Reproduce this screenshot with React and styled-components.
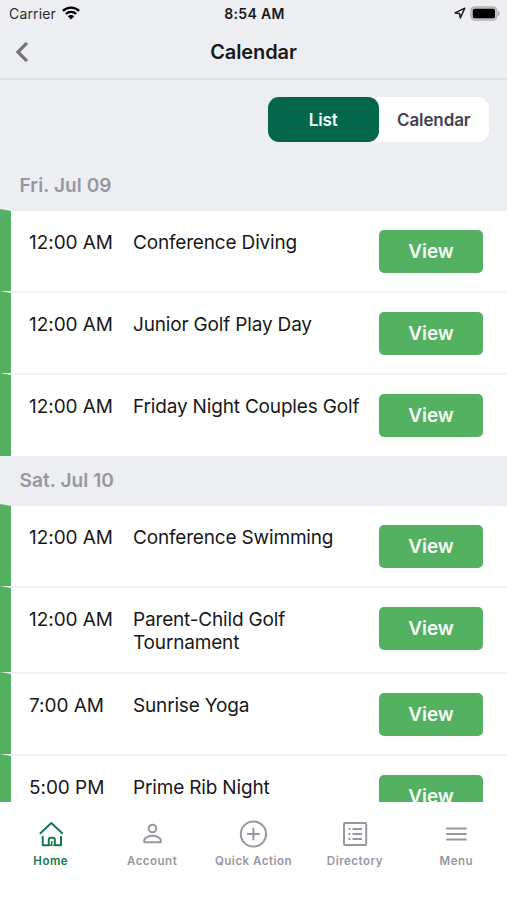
import React, { useState } from 'react';
import styled, { createGlobalStyle } from 'styled-components';

const GlobalStyle = createGlobalStyle`
  * {
    box-sizing: border-box;
  }
  body {
    margin: 0;
    background: #fff;
    font-family: Inter, 'Liberation Sans', sans-serif;
    color: #18181a;
  }
  button {
    font-family: inherit;
    border: 0;
    padding: 0;
    cursor: pointer;
  }
`;

const Screen = styled.div`
  width: 507px;
  height: 900px;
  display: flex;
  flex-direction: column;
  overflow: hidden;
  background: #edeef2;
`;

const StatusBar = styled.div`
  height: 27px;
  flex: none;
  display: grid;
  grid-template-columns: 1fr auto 1fr;
  align-items: center;
  padding: 0 7px 0 9px;
`;

const StatusGroup = styled.div`
  display: flex;
  align-items: center;
  justify-content: ${(props) => (props.$end ? 'flex-end' : 'flex-start')};
  gap: ${(props) => (props.$end ? '4px' : '6px')};
  & svg {
    display: block;
    margin-bottom: 1px;
  }
`;

const Carrier = styled.span`
  font-size: 14px;
  line-height: 27px;
  letter-spacing: 0.15px;
  color: #2b2b2e;
`;

const Clock = styled.span`
  font-size: 14px;
  font-weight: 600;
  line-height: 27px;
  letter-spacing: 0.35px;
`;

const NavBar = styled.header`
  height: 53px;
  flex: none;
  display: grid;
  grid-template-columns: 1fr auto 1fr;
  align-items: center;
  padding: 0 14px 1px;
  border-bottom: 2px solid #dfe0e3;
`;

const BackButton = styled.button`
  width: 16px;
  height: 24px;
  background: none;
  & svg {
    display: block;
  }
`;

const Title = styled.h1`
  margin: 0;
  font-size: 20px;
  font-weight: 600;
  line-height: 26px;
  letter-spacing: -0.1px;
`;

const SwitchRow = styled.div`
  height: 80px;
  flex: none;
  display: flex;
  justify-content: flex-end;
  align-items: center;
  padding: 0 18px 1px 0;
`;

const Segmented = styled.div`
  display: flex;
  width: 221px;
  height: 45px;
  border-radius: 11px;
  background: #fff;
`;

const Segment = styled.button`
  flex: 1;
  border-radius: 11px;
  font-size: 17px;
  font-weight: 600;
  letter-spacing: -0.1px;
  padding-top: 1px;
  background: ${(props) => (props.$active ? '#04674b' : 'transparent')};
  color: ${(props) => (props.$active ? '#f3faf7' : '#424450')};
`;

const List = styled.main`
  flex: 1;
  min-height: 0;
  overflow: hidden;
`;

const DayHeader = styled.h2`
  margin: 0;
  height: ${(props) => (props.$first ? '49px' : '48px')};
  padding-left: 19.5px;
  font-size: 19px;
  font-weight: 600;
  line-height: ${(props) => (props.$first ? '51px' : '49px')};
  letter-spacing: 0.1px;
  color: #9698a1;
`;

const EventRow = styled.div`
  display: flex;
  align-items: flex-start;
  height: ${(props) => props.$height}px;
  padding: 19px 24px 0 18px;
  border-top: 2px solid ${(props) => (props.$first ? '#edeef2' : '#f3f3f5')};
  border-left: 11px solid #55b162;
  background: #fff;
`;

const Time = styled.div`
  width: 104px;
  flex: none;
  padding-top: 1px;
  font-size: 19px;
  line-height: 24px;
  letter-spacing: -0.05px;
`;

const EventName = styled.div`
  flex: 1;
  padding-top: 1px;
  font-size: 19px;
  line-height: 23px;
  letter-spacing: -0.17px;
`;

const ViewButton = styled.button`
  width: 104px;
  height: 43px;
  flex: none;
  border-radius: 5px;
  background: #55b162;
  color: #f5fbf6;
  font-size: 19px;
  font-weight: 600;
  letter-spacing: -0.1px;
`;

const TabBar = styled.nav`
  height: 98px;
  flex: none;
  display: grid;
  grid-template-columns: repeat(5, 1fr);
  align-items: start;
  padding-top: 18px;
  background: #fff;
`;

const Tab = styled.button`
  display: flex;
  flex-direction: column;
  align-items: center;
  gap: 5px;
  background: none;
  white-space: nowrap;
  font-size: 11.5px;
  line-height: 16px;
  font-weight: 600;
  letter-spacing: 0.5px;
  color: ${(props) => (props.$active ? '#15784f' : '#9698a1')};
  & svg {
    display: block;
  }
`;

const WifiIcon = () => (
  <svg width="18" height="14" viewBox="0 0 18 14" fill="none">
    <g stroke="#000" strokeWidth="2.3">
      <path d="M0.9 4.9a11.6 11.6 0 0 1 16.2 0" />
      <path d="M3.8 8a7.5 7.5 0 0 1 10.4 0" />
    </g>
    <path d="M9 13.6L5.8 10.3a4.6 4.6 0 0 1 6.4 0z" fill="#000" />
  </svg>
);

const LocationIcon = () => (
  <svg width="12" height="12" viewBox="0 0 12 12" fill="none">
    <path
      d="M10.8 1.2L1.1 5.9l4.4.7.8 4.3z"
      stroke="#1c1c24"
      strokeWidth="1.5"
      strokeLinejoin="round"
    />
  </svg>
);

const BatteryIcon = () => (
  <svg width="30" height="15" viewBox="0 0 30 15">
    <rect
      x="0.9"
      y="0.9"
      width="26"
      height="13.2"
      rx="4"
      fill="#c4c4c6"
      stroke="#b2b2b4"
      strokeWidth="1.3"
    />
    <rect x="2.8" y="2.8" width="22.2" height="9.4" rx="1.8" fill="#000" />
    <path d="M28 5v5c1.2-.4 1.8-1.3 1.8-2.5S29.2 5.4 28 5z" fill="#a9a9ab" />
  </svg>
);

const BackIcon = () => (
  <svg width="16" height="24" viewBox="0 0 16 24" fill="none">
    <path d="M13 2.8L3.9 12l9.1 9.2" stroke="#75767a" strokeWidth="3.2" />
  </svg>
);

const icons = {
  home: (
    <>
      <path d="M2.4 13.2L13.3 3l10.9 10.2" />
      <path d="M4.7 16.8v8.5h6.1v-5.4c0-1.4.8-2.2 2.1-2.2h1.8c1.3 0 2.1.8 2.1 2.2v5.4h6.2v-8.5" />
      <path d="M13.8 21.4v3.9h-3M16.8 25.3h-1" strokeWidth="1.4" />
    </>
  ),
  account: (
    <>
      <circle cx="13.5" cy="8.5" r="3.8" />
      <path d="M5.2 22.2v-1.7c0-3 4.4-4.7 8.3-4.7s8.3 1.7 8.3 4.7v1.7z" />
    </>
  ),
  quick: (
    <>
      <circle cx="14.4" cy="14" r="12.6" />
      <path d="M14.4 7.7v12.6M8.1 14h12.6" />
    </>
  ),
  directory: (
    <>
      <rect x="2" y="2.9" width="22.2" height="22.2" rx="1" />
      <path d="M10.5 9h9.5M10.5 14h9.5M10.5 19h9.5M6.5 9h1.9M6.5 14h1.9M6.5 19h1.9" />
    </>
  ),
  menu: <path d="M3.2 8.4h20.4M3.2 14h20.4M3.2 19.6h20.4" />,
};

const TabIcon = ({ name }) => {
  const size = name === 'quick' ? 28 : 26;
  return (
    <svg
      width={size}
      height="28"
      viewBox={`0 0 ${size} 28`}
      fill="none"
      stroke="currentColor"
      strokeWidth="2"
      strokeLinecap={name === 'home' ? 'round' : 'butt'}
      strokeLinejoin="round"
    >
      {icons[name]}
    </svg>
  );
};

const days = [
  {
    label: 'Fri. Jul 09',
    events: [
      { time: '12:00 AM', name: 'Conference Diving', height: 82 },
      { time: '12:00 AM', name: 'Junior Golf Play Day', height: 82 },
      { time: '12:00 AM', name: 'Friday Night Couples Golf', height: 83 },
    ],
  },
  {
    label: 'Sat. Jul 10',
    events: [
      { time: '12:00 AM', name: 'Conference Swimming', height: 82 },
      { time: '12:00 AM', name: 'Parent-Child Golf Tournament', height: 86 },
      { time: '7:00 AM', name: 'Sunrise Yoga', height: 82 },
      { time: '5:00 PM', name: 'Prime Rib Night', height: 82 },
    ],
  },
];

const tabs = [
  { id: 'home', label: 'Home' },
  { id: 'account', label: 'Account' },
  { id: 'quick', label: 'Quick Action' },
  { id: 'directory', label: 'Directory' },
  { id: 'menu', label: 'Menu' },
];

const App = () => {
  const [view, setView] = useState('List');

  return (
    <Screen>
      <GlobalStyle />
      <StatusBar>
        <StatusGroup>
          <Carrier>Carrier</Carrier>
          <WifiIcon />
        </StatusGroup>
        <Clock>8:54 AM</Clock>
        <StatusGroup $end>
          <LocationIcon />
          <BatteryIcon />
        </StatusGroup>
      </StatusBar>
      <NavBar>
        <BackButton aria-label="Back">
          <BackIcon />
        </BackButton>
        <Title>Calendar</Title>
      </NavBar>
      <SwitchRow>
        <Segmented>
          {['List', 'Calendar'].map((item) => (
            <Segment
              key={item}
              $active={view === item}
              onClick={() => setView(item)}
            >
              {item}
            </Segment>
          ))}
        </Segmented>
      </SwitchRow>
      <List>
        {days.map((day, dayIndex) => (
          <section key={day.label}>
            <DayHeader $first={dayIndex === 0}>{day.label}</DayHeader>
            {day.events.map((event, index) => (
              <EventRow
                key={event.name}
                $first={index === 0}
                $height={event.height}
              >
                <Time>{event.time}</Time>
                <EventName>{event.name}</EventName>
                <ViewButton>View</ViewButton>
              </EventRow>
            ))}
          </section>
        ))}
      </List>
      <TabBar>
        {tabs.map((tab) => (
          <Tab key={tab.id} $active={tab.id === 'home'}>
            <TabIcon name={tab.id} />
            {tab.label}
          </Tab>
        ))}
      </TabBar>
    </Screen>
  );
};

export default App;
